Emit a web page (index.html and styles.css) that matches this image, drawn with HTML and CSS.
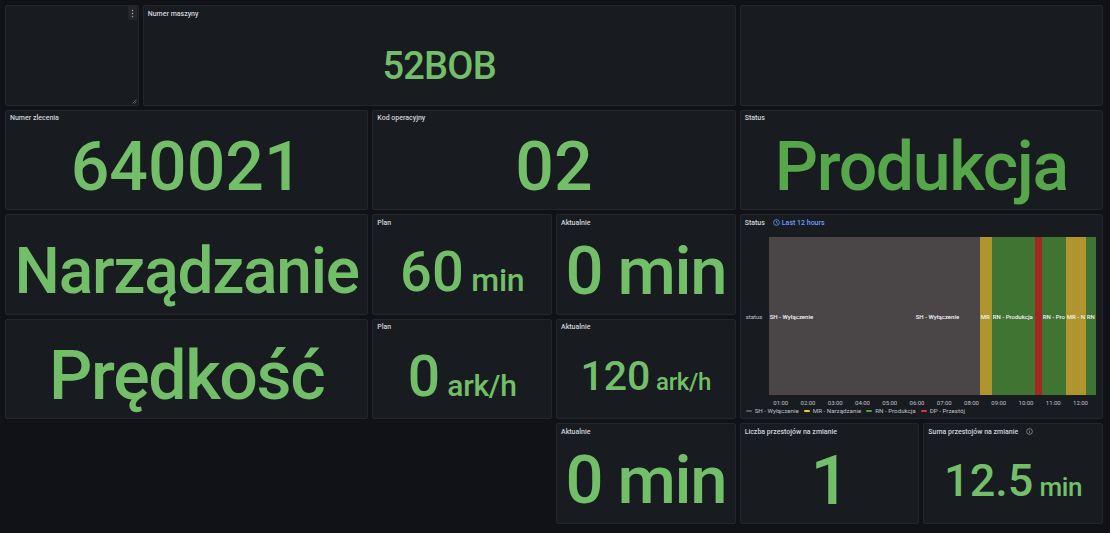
FILE: index.html
```html
<!DOCTYPE html>
<html lang="pl">
<head>
<meta charset="utf-8">
<title>Dashboard</title>
<link rel="stylesheet" href="styles.css">
</head>
<body>
<div class="dash">
  <section class="panel p-a">
    <button class="menu" aria-label="menu">
      <svg width="3" height="9" viewBox="0 0 3 9"><circle cx="1.5" cy="1.5" r="0.8" fill="#9fa1a8"/><circle cx="1.5" cy="4.5" r="0.8" fill="#9fa1a8"/><circle cx="1.5" cy="7.5" r="0.8" fill="#9fa1a8"/></svg>
    </button>
    <svg class="resize" width="5" height="5" viewBox="0 0 5 5"><path d="M4.5 0.5 L0.5 4.5 M4.5 2.5 L2.5 4.5" stroke="#6d6f75" stroke-width="0.8"/></svg>
  </section>

  <section class="panel p-b">
    <header class="ptitle">Numer maszyny</header>
    <div class="pbody"><span class="val v-machine">52BOB</span></div>
  </section>

  <section class="panel p-c"></section>

  <section class="panel p-order">
    <header class="ptitle">Numer zlecenia</header>
    <div class="pbody"><span class="val v-big">640021</span></div>
  </section>

  <section class="panel p-code">
    <header class="ptitle">Kod operacyjny</header>
    <div class="pbody"><span class="val v-big">02</span></div>
  </section>

  <section class="panel p-status">
    <header class="ptitle">Status</header>
    <div class="pbody"><span class="val v-status">Produkcja</span></div>
  </section>

  <section class="panel p-mode">
    <div class="pbody nohead"><span class="val v-mode">Narządzanie</span></div>
  </section>

  <section class="panel p-plan1">
    <header class="ptitle">Plan</header>
    <div class="pbody"><span class="val"><span class="num n-plan1">60</span><span class="unit u-plan1"> min</span></span></div>
  </section>

  <section class="panel p-act1">
    <header class="ptitle">Aktualnie</header>
    <div class="pbody"><span class="val v-act">0 min</span></div>
  </section>

  <section class="panel p-tl">
    <header class="ptitle">Status
      <span class="range">
        <svg width="7" height="7" viewBox="0 0 8 8"><circle cx="4" cy="4" r="3.3" fill="none" stroke="#6e9fff" stroke-width="0.9"/><path d="M4 2.2 V4.2 L5.3 5" fill="none" stroke="#6e9fff" stroke-width="0.9"/></svg>
        Last 12 hours
      </span>
    </header>
    <div class="tl">
      <div class="tl-main">
        <div class="tl-ylab">status</div>
        <div class="tl-plot">
          <div class="seg sh" style="flex-basis:146px"><span>SH - Wyłączenie</span></div>
          <div class="seg sh" style="flex-basis:65px"><span>SH - Wyłączenie</span></div>
          <div class="seg mr" style="flex-basis:12px"><span>MR</span></div>
          <div class="seg rn" style="flex-basis:43px"><span>RN - Produkcja</span></div>
          <div class="seg dp" style="flex-basis:7px"></div>
          <div class="seg rn" style="flex-basis:24px"><span>RN - Pro</span></div>
          <div class="seg mr" style="flex-basis:20px"><span>MR - N</span></div>
          <div class="seg rn" style="flex-basis:10px"><span>RN</span></div>
        </div>
      </div>
      <div class="tl-x">
        <span>01:00</span><span>02:00</span><span>03:00</span><span>04:00</span><span>05:00</span><span>06:00</span><span>07:00</span><span>08:00</span><span>09:00</span><span>10:00</span><span>11:00</span><span>12:00</span>
      </div>
      <div class="tl-legend">
        <span class="li"><i class="dash-sh"></i>SH - Wyłączenie</span>
        <span class="li"><i class="dash-mr"></i>MR - Narządzanie</span>
        <span class="li"><i class="dash-rn"></i>RN - Produkcja</span>
        <span class="li"><i class="dash-dp"></i>DP - Przestój</span>
      </div>
    </div>
  </section>

  <section class="panel p-speed">
    <div class="pbody nohead"><span class="val v-speed">Prędkość</span></div>
  </section>

  <section class="panel p-plan2">
    <header class="ptitle">Plan</header>
    <div class="pbody"><span class="val"><span class="num n-plan2">0</span><span class="unit u-plan2"> ark/h</span></span></div>
  </section>

  <section class="panel p-act2">
    <header class="ptitle">Aktualnie</header>
    <div class="pbody"><span class="val"><span class="num n-act2">120</span><span class="unit u-act2"> ark/h</span></span></div>
  </section>

  <section class="panel p-act3">
    <header class="ptitle">Aktualnie</header>
    <div class="pbody"><span class="val v-act">0 min</span></div>
  </section>

  <section class="panel p-count">
    <header class="ptitle">Liczba przestojów na zmianie</header>
    <div class="pbody"><span class="val v-one">1</span></div>
  </section>

  <section class="panel p-sum">
    <header class="ptitle">Suma przestojów na zmianie
      <svg class="info" width="7" height="7" viewBox="0 0 8 8"><circle cx="4" cy="4" r="3.3" fill="none" stroke="#9fa1a8" stroke-width="0.8"/><path d="M4 3.6 V5.8" stroke="#9fa1a8" stroke-width="0.8"/><circle cx="4" cy="2.4" r="0.45" fill="#9fa1a8"/></svg>
    </header>
    <div class="pbody"><span class="val"><span class="num n-sum">12.5</span><span class="unit u-sum"> min</span></span></div>
  </section>
</div>
</body>
</html>
```

FILE: styles.css
```css
* { box-sizing: border-box; margin: 0; padding: 0; }

html, body {
  background: #111217;
  width: 1110px;
  height: 533px;
  overflow: hidden;
}

body {
  font-family: Roboto, Inter, "Liberation Sans", sans-serif;
  color: #ccccdc;
}

.dash {
  display: grid;
  grid-template-columns: repeat(24, 1fr);
  grid-template-rows: repeat(5, 100.5px);
  gap: 4px;
  padding: 5px 7px 0 5px;
  width: 1110px;
}

.panel {
  background: #181b1f;
  border: 1px solid #24262b;
  border-radius: 2px;
  display: flex;
  flex-direction: column;
  position: relative;
  overflow: hidden;
  min-width: 0;
}

/* grid placement */
.p-a { grid-column: 1 / 4; grid-row: 1; }
.p-b { grid-column: 4 / 17; grid-row: 1; }
.p-c { grid-column: 17 / 25; grid-row: 1; }
.p-order { grid-column: 1 / 9; grid-row: 2; }
.p-code { grid-column: 9 / 17; grid-row: 2; }
.p-status { grid-column: 17 / 25; grid-row: 2; }
.p-mode { grid-column: 1 / 9; grid-row: 3; }
.p-plan1 { grid-column: 9 / 13; grid-row: 3; }
.p-act1 { grid-column: 13 / 17; grid-row: 3; }
.p-tl { grid-column: 17 / 25; grid-row: 3 / 5; }
.p-speed { grid-column: 1 / 9; grid-row: 4; }
.p-plan2 { grid-column: 9 / 13; grid-row: 4; }
.p-act2 { grid-column: 13 / 17; grid-row: 4; }
.p-act3 { grid-column: 13 / 17; grid-row: 5; }
.p-count { grid-column: 17 / 21; grid-row: 5; }
.p-sum { grid-column: 21 / 25; grid-row: 5; }

.ptitle {
  height: 15px;
  flex: none;
  display: flex;
  align-items: center;
  padding: 0 4px;
  font-size: 7px;
  font-weight: 500;
  color: #d2d3dc;
  white-space: nowrap;
}

.pbody {
  flex: 1;
  display: flex;
  align-items: center;
  justify-content: center;
  min-height: 0;
}
.pbody.nohead { padding-top: 15px; }

.val {
  color: #73bf69;
  font-weight: 500;
  line-height: 1;
  white-space: nowrap;
  display: flex;
  align-items: baseline;
  letter-spacing: -0.02em;
}

.v-machine { font-size: 38px; margin-top: 7px; }
.v-big { font-size: 68px; letter-spacing: 0; }
.v-status { font-size: 68px; color: #56a64b; }
.v-mode { font-size: 64px; }
.v-speed { font-size: 68px; }
.v-act { font-size: 67px; }
.v-one { font-size: 69px; }

.unit { white-space: pre; }
.num { letter-spacing: 0; }
.n-plan1 { font-size: 56px; }
.u-plan1 { font-size: 32px; }
.n-plan2 { font-size: 57px; }
.u-plan2 { font-size: 30px; }
.n-act2 { font-size: 41px; }
.u-act2 { font-size: 24px; }
.n-sum { font-size: 45px; }
.u-sum { font-size: 26px; }

/* first panel decorations */
.menu {
  position: absolute;
  top: 0;
  right: 1px;
  width: 9px;
  height: 14px;
  background: #24262b;
  border: none;
  border-radius: 1px;
  display: flex;
  align-items: center;
  justify-content: center;
}
.resize {
  position: absolute;
  right: 1px;
  bottom: 1px;
}

.info { margin-left: 8px; }

/* time range */
.range {
  display: inline-flex;
  align-items: center;
  gap: 2px;
  margin-left: 8px;
  color: #6e9fff;
  font-weight: 500;
}

/* state timeline */
.tl {
  flex: 1;
  display: flex;
  flex-direction: column;
  padding: 0 6px 0 5px;
}
.tl-main {
  display: flex;
  height: 158px;
  margin-top: 7px;
}
.tl-ylab {
  width: 23px;
  flex: none;
  display: flex;
  align-items: center;
  font-size: 6px;
  color: #c0c1ca;
}
.tl-plot {
  flex: 1;
  display: flex;
}
.seg {
  flex-grow: 0;
  flex-shrink: 0;
  display: flex;
  align-items: center;
  overflow: hidden;
  padding-left: 1px;
}
.seg span {
  font-size: 6px;
  font-weight: 500;
  color: #f2f2f5;
  white-space: nowrap;
}
.sh { background: #4a4648; }
.mr { background: #b0952e; }
.rn { background: #3f7432; }
.dp { background: #a2281f; }

.tl-x {
  display: flex;
  margin-top: 2px;
  height: 10px;
  align-items: center;
  padding-left: 21.5px;
}
.tl-x span {
  width: 27.25px;
  flex: none;
  text-align: center;
  font-size: 6px;
  color: #c0c1ca;
}
.tl-legend {
  display: flex;
  height: 8px;
  align-items: center;
  gap: 5px;
  font-size: 6.2px;
  color: #c0c1ca;
}
.li {
  display: inline-flex;
  align-items: center;
  gap: 3px;
}
.li i {
  display: inline-block;
  width: 6px;
  height: 2px;
  border-radius: 1px;
}
.dash-sh { background: #5f5b5d; }
.dash-mr { background: #e0d030; }
.dash-rn { background: #5a9e48; }
.dash-dp { background: #e02f44; }
```
